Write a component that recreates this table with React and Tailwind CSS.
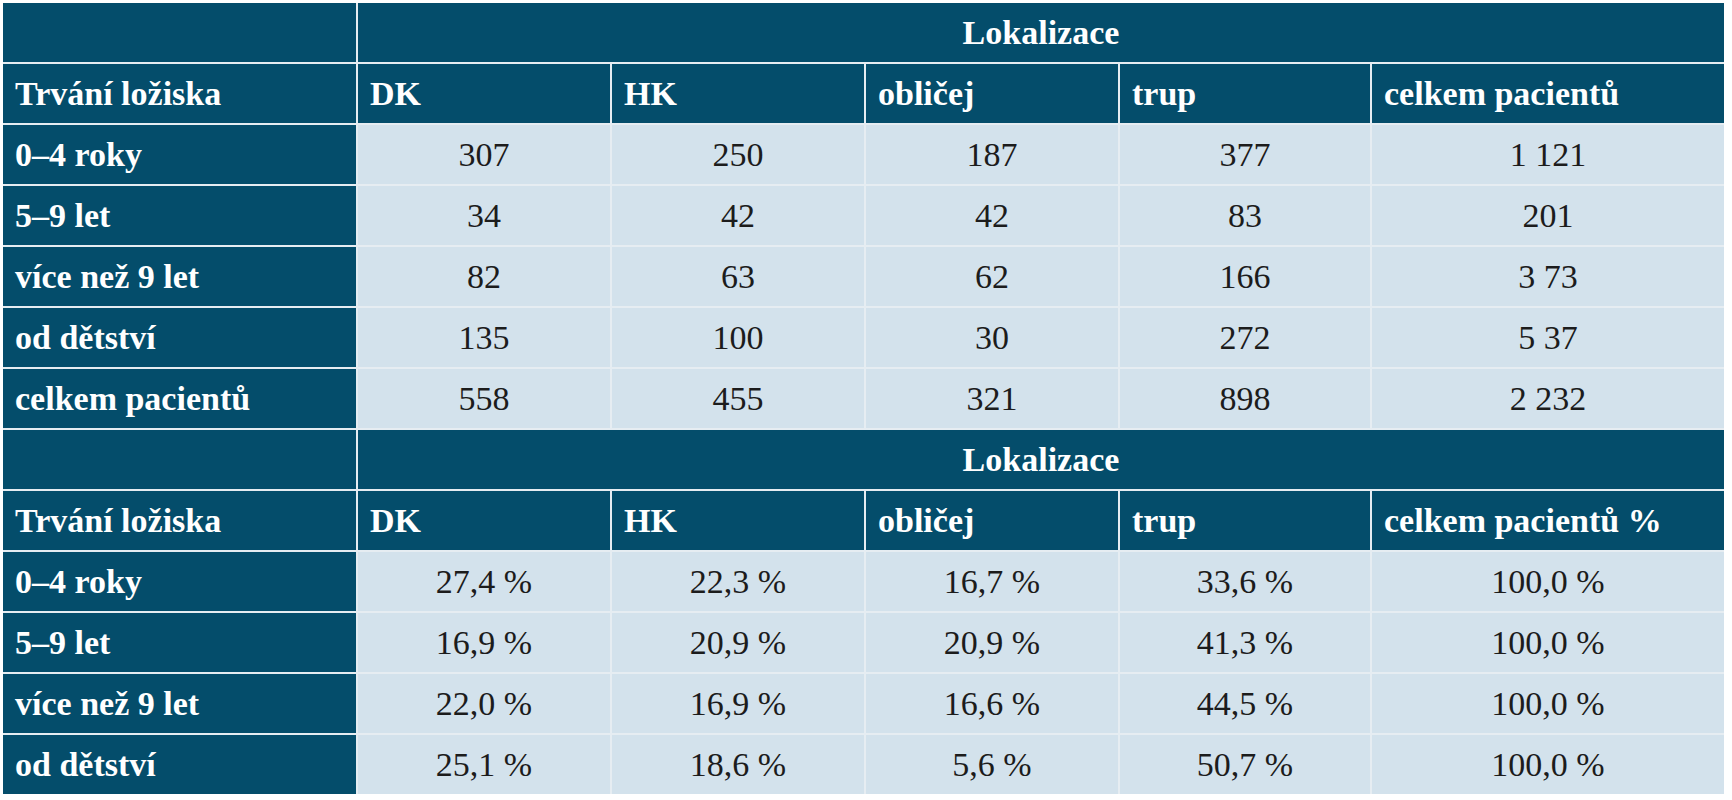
import React from 'react';

const counts = [
  ['0–4 roky', '307', '250', '187', '377', '1 121'],
  ['5–9 let', '34', '42', '42', '83', '201'],
  ['více než 9 let', '82', '63', '62', '166', '3 73'],
  ['od dětství', '135', '100', '30', '272', '5 37'],
  ['celkem pacientů', '558', '455', '321', '898', '2 232'],
];

const percents = [
  ['0–4 roky', '27,4 %', '22,3 %', '16,7 %', '33,6 %', '100,0 %'],
  ['5–9 let', '16,9 %', '20,9 %', '20,9 %', '41,3 %', '100,0 %'],
  ['více než 9 let', '22,0 %', '16,9 %', '16,6 %', '44,5 %', '100,0 %'],
  ['od dětství', '25,1 %', '18,6 %', '5,6 %', '50,7 %', '100,0 %'],
];

const dark = 'bg-[#044d6b] text-white font-bold flex items-center px-3';
const light = 'bg-[#d3e2ec] text-[#1c1c1c] flex items-center justify-center';

const Block = ({ last, rows }) => (
  <>
    <div className={dark} />
    <div className={`${dark} col-span-5 justify-center`}>Lokalizace</div>
    <div className={dark}>Trvání ložiska</div>
    <div className={dark}>DK</div>
    <div className={dark}>HK</div>
    <div className={dark}>obličej</div>
    <div className={dark}>trup</div>
    <div className={dark}>{last}</div>
    {rows.map((row) => (
      <React.Fragment key={row[0]}>
        <div className={dark}>{row[0]}</div>
        {row.slice(1).map((v, i) => (
          <div key={i} className={light}>{v}</div>
        ))}
      </React.Fragment>
    ))}
  </>
);

export default function App() {
  return (
    <div className="w-[1732px] h-[800px] bg-white pt-[3px] pl-[3px] font-['Liberation_Serif',serif] text-[34px] leading-none">
      <div className="grid grid-cols-[353px_252px_252px_252px_250px_352px] auto-rows-[59px] gap-[2px] bg-[#e6edf2] w-fit">
        <Block last="celkem pacientů" rows={counts} />
        <Block last="celkem pacientů %" rows={percents} />
      </div>
    </div>
  );
}
